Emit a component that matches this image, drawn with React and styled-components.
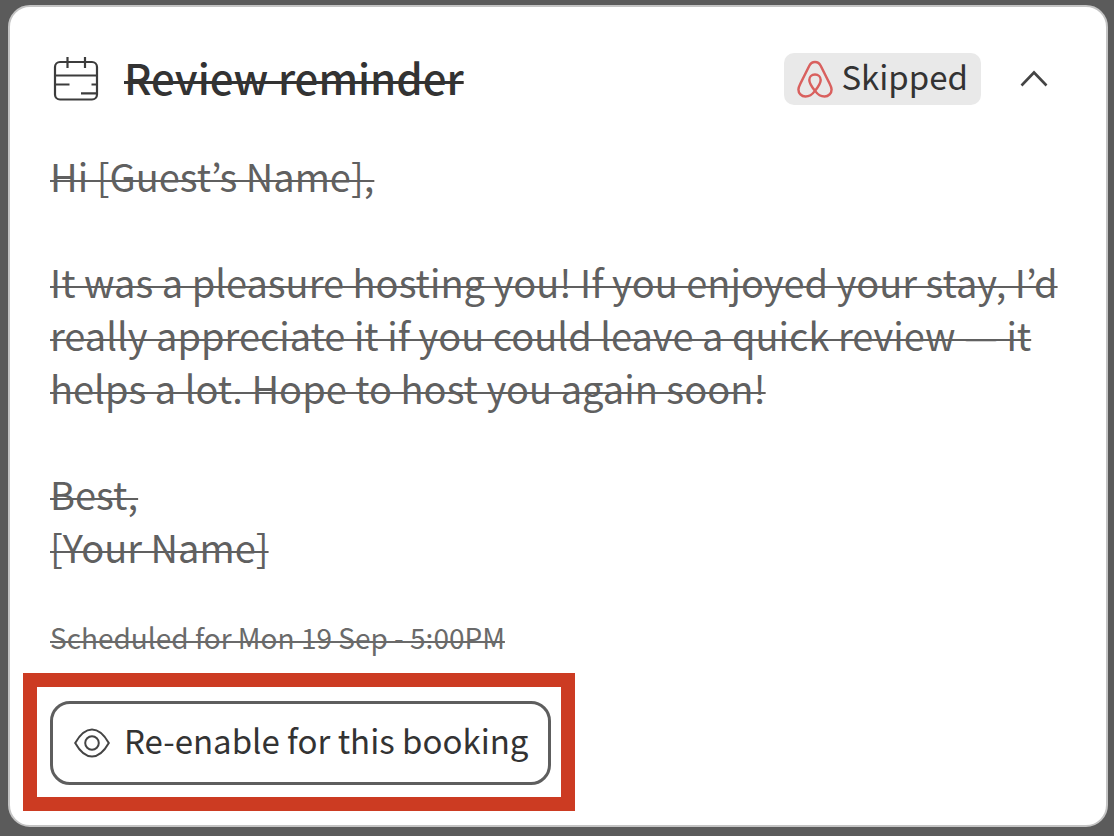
import React from "react"
import styled, { createGlobalStyle } from "styled-components"

const GlobalStyle = createGlobalStyle`
  * {
    box-sizing: border-box;
  }
  body {
    margin: 0;
    background: #5b5b5b;
    color: #333333;
    font-family: "Noto Sans CJK JP", "Noto Sans", sans-serif;
  }
`

const Page = styled.main`
  padding: 5px 6px 8px 8px;
`

const Card = styled.article`
  padding: 44px 40px 14px;
  background: #ffffff;
  border: 2px solid #c4c4c4;
  border-radius: 22px;
`

const Header = styled.header`
  display: flex;
  align-items: center;
  height: 56px;
  margin-bottom: 42px;
`

// the line sits a little lower than the browser's own line-through
const Struck = styled.s`
  text-decoration: underline;
  text-decoration-thickness: ${props => props.$thickness || 2}px;
  text-decoration-skip-ink: none;
  text-underline-offset: -${props => props.$rise}px;
`

const Title = styled.h2`
  flex-grow: 1;
  margin: 0;
  padding: 0 0 4px 24px;
  font-size: 42px;
  font-weight: 500;
  line-height: 52px;
`

const Badge = styled.span`
  display: flex;
  align-items: center;
  gap: 8px;
  height: 52px;
  padding: 0 13px;
  background: #e9e9e9;
  border-radius: 10px;
  font-size: 33px;
`

const Label = styled.span`
  padding-bottom: 6px;
  line-height: 44px;
`

const Toggle = styled.button`
  display: flex;
  margin: 0 18px 0 39px;
  padding: 0;
  background: none;
  border: 0;
  color: #444444;
  cursor: pointer;
`

const Message = styled.div`
  display: grid;
  gap: 53px;
  padding-bottom: 44px;
  color: #606060;
  font-size: 38px;
  line-height: 53px;
`

const Paragraph = styled.p`
  margin: 0;
`

const Schedule = styled.p`
  margin: 0 0 16px;
  color: #6a6a6a;
  font-size: 28px;
  line-height: 40px;
`

const Highlight = styled.div`
  width: fit-content;
  margin-left: -27px;
  padding: 14px 10px 12px 13px;
  border: 14px solid #cc3b22;
`

const ActionButton = styled.button`
  display: flex;
  align-items: center;
  gap: 14px;
  height: 84px;
  padding: 0 20px 0 21px;
  background: #ffffff;
  border: 3px solid #5e5e5e;
  border-radius: 20px;
  color: #333333;
  font-family: inherit;
  font-size: 33px;
  cursor: pointer;
`

const CalendarIcon = () => (
  <svg width="50" height="48" viewBox="0 0 50 48" fill="none" stroke="#3c3c3c" strokeWidth="2.2" aria-hidden="true">
    <rect x="5" y="7" width="42" height="37.500" rx="5" />
    <path d="M17.500 2v11M35 2v11M5 20.500h42M5 29.500h14.500M41.500 29.500H47M31 38.300H47" />
  </svg>
)

const AirbnbIcon = () => (
  <svg width="36" height="39" viewBox="0 0 38 40" fill="none" stroke="#d9605e" strokeWidth="2.6" aria-hidden="true">
    <path d="M19 32C15 27 13 23.500 13 20.500C13 17 15.500 14.800 19 14.800C22.500 14.800 25 17 25 20.500C25 23.500 23 27 19 32C16 36 12.500 38 9 38C4.500 38 1.500 34.500 1.500 30.500C1.500 28.500 2.500 26.500 3.500 24.500L13 5.500C14.500 2.500 16 1.500 19 1.500C22 1.500 23.500 2.500 25 5.500L34.500 24.500C35.500 26.500 36.500 28.500 36.500 30.500C36.500 34.500 33.500 38 29 38C25.500 38 22 36 19 32Z" />
  </svg>
)

const ChevronIcon = () => (
  <svg width="28" height="18" viewBox="0 0 28 18" fill="none" stroke="currentColor" strokeWidth="2.6" aria-hidden="true">
    <path d="M1.500 15.500L14 2.500L26.500 15.500" />
  </svg>
)

const EyeIcon = () => (
  <svg width="36" height="30" viewBox="0 0 36 30" fill="none" stroke="#444444" strokeWidth="2" aria-hidden="true">
    <path d="M1.200 15C6 6.500 11.500 1.500 18 1.500S30 6.500 34.800 15C30 23.500 24.500 28.500 18 28.500S6 23.500 1.200 15Z" />
    <circle cx="18" cy="15" r="6.800" />
  </svg>
)

export default function App() {
  const [open, setOpen] = React.useState(true)

  return (
    <Page>
      <GlobalStyle />
      <Card>
        <Header>
          <CalendarIcon />
          <Title>
            <Struck $rise={14} $thickness={3}>Review reminder</Struck>
          </Title>
          <Badge>
            <AirbnbIcon />
            <Label>Skipped</Label>
          </Badge>
          <Toggle aria-label="Toggle message" aria-expanded={open} onClick={() => setOpen(!open)}>
            <ChevronIcon />
          </Toggle>
        </Header>
        {open && (
          <Message>
            <Paragraph>
              <Struck $rise={12}>Hi [Guest’s Name],</Struck>
            </Paragraph>
            <Paragraph>
              <Struck $rise={12}>
                It was a pleasure hosting you! If you enjoyed your stay, I’d really appreciate it if you could leave a quick review — it helps a lot. Hope to host you again soon!
              </Struck>
            </Paragraph>
            <Paragraph>
              <Struck $rise={12}>
                Best,
                <br />
                [Your Name]
              </Struck>
            </Paragraph>
          </Message>
        )}
        <Schedule>
          <Struck $rise={8}>Scheduled for Mon 19 Sep - 5:00PM</Struck>
        </Schedule>
        <Highlight>
          <ActionButton>
            <EyeIcon />
            <Label>Re-enable for this booking</Label>
          </ActionButton>
        </Highlight>
      </Card>
    </Page>
  )
}
